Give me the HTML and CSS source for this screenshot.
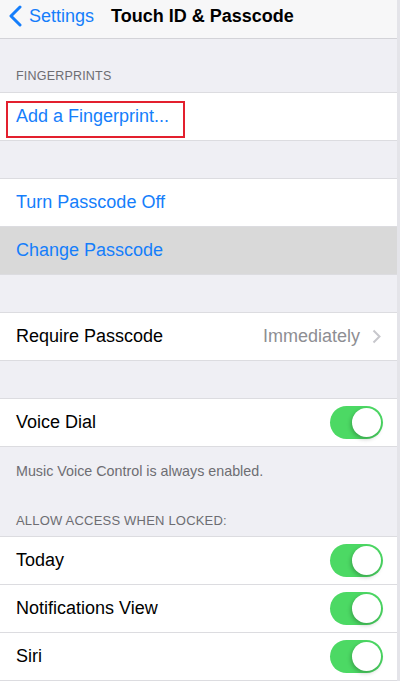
FILE: index.html
```html
<!DOCTYPE html>
<html>
<head>
    <meta charset="utf-8">
    <title>Touch ID &amp; Passcode</title>
    <link rel="stylesheet" href="styles.css">
</head>
<body>
    <div class="nav">
        <div class="nav-back">
            <svg class="chevron-back" width="16" height="22" viewBox="0 0 16 22"><path d="M13 2 L4 11 L13 20" fill="none" stroke="#157efb" stroke-width="3" stroke-linecap="round" stroke-linejoin="round"/></svg>
            <span>Settings</span>
        </div>
        <div class="nav-title">Touch ID &amp; Passcode</div>
    </div>

    <div class="section-header first">FINGERPRINTS</div>
    <div class="group">
        <div class="row">
            <span class="label blue">Add a Fingerprint...</span>
            <div class="highlight-box"></div>
        </div>
    </div>

    <div class="spacer"></div>
    <div class="group">
        <div class="row">
            <span class="label blue">Turn Passcode Off</span>
        </div>
        <div class="row pressed">
            <span class="label blue">Change Passcode</span>
        </div>
    </div>

    <div class="spacer"></div>
    <div class="group">
        <div class="row">
            <span class="label">Require Passcode</span>
            <span class="detail">Immediately</span>
            <svg class="disclosure" width="9" height="15" viewBox="0 0 9 15"><path d="M1.5 1.5 L7.5 7.5 L1.5 13.5" fill="none" stroke="#c7c7cc" stroke-width="2"/></svg>
        </div>
    </div>

    <div class="spacer"></div>
    <div class="group">
        <div class="row">
            <span class="label">Voice Dial</span>
            <div class="switch"><div class="knob"></div></div>
        </div>
    </div>
    <div class="section-footer">Music Voice Control is always enabled.</div>

    <div class="section-header locked">ALLOW ACCESS WHEN LOCKED:</div>
    <div class="group">
        <div class="row">
            <span class="label">Today</span>
            <div class="switch"><div class="knob"></div></div>
        </div>
        <div class="row">
            <span class="label">Notifications View</span>
            <div class="switch"><div class="knob"></div></div>
        </div>
        <div class="row">
            <span class="label">Siri</span>
            <div class="switch"><div class="knob"></div></div>
        </div>
    </div>
</body>
</html>
```

FILE: styles.css
```css
html, body { margin: 0; padding: 0; }
body {
    width: 397px;
    height: 681px;
    overflow: hidden;
    background-color: #efeff4;
    font-family: "Liberation Sans", Arial, sans-serif;
    border-right: 3px solid #e4e4e9;
}

.nav {
    height: 32px;
    padding-bottom: 6px;
    background-color: #f7f7f8;
    border-bottom: 1px solid #d3d3d8;
    display: flex;
    align-items: center;
}
.nav-back {
    display: flex;
    align-items: center;
    color: #157efb;
    font-size: 18px;
    padding-left: 7px;
    width: 104px;
}
.chevron-back { margin-right: 6px; }
.nav-title {
    font-size: 18px;
    font-weight: bold;
    color: #000;
}

.section-header {
    font-size: 12.5px;
    line-height: 15px;
    color: #6d6d72;
    padding: 33px 16px 8px 16px;
    letter-spacing: 0.2px;
}
.section-header.first { padding: 30px 16px 8px 16px; }
.section-header.locked { font-size: 13px; }
.section-footer {
    font-size: 14.3px;
    line-height: 17px;
    color: #6d6d72;
    padding: 16px 16px 0 16px;
}

.spacer { height: 37px; }

.group {
    background-color: #fff;
    border-top: 1px solid #dcdce0;
    border-bottom: 1px solid #dcdce0;
}
.row {
    position: relative;
    height: 47px;
    display: flex;
    align-items: center;
    padding: 0 16px;
}
.row + .row { border-top: 1px solid #dcdce0; }
.row.pressed { background-color: #d9d9d9; }

.label { font-size: 18px; color: #000; flex: 1; }
.label.blue { color: #157efb; }
.detail { font-size: 18px; color: #8e8e93; margin-right: 12px; }

.highlight-box {
    position: absolute;
    left: 6px;
    top: 8px;
    width: 175px;
    height: 33px;
    border: 2px solid #e3202e;
}

.switch {
    width: 53px;
    height: 33px;
    border-radius: 17px;
    background-color: #4cd964;
    position: relative;
    margin-right: -2px;
}
.knob {
    position: absolute;
    right: 2px;
    top: 2px;
    width: 29px;
    height: 29px;
    border-radius: 50%;
    background-color: #fff;
    box-shadow: -1px 2px 4px rgba(0, 0, 0, 0.25);
}
```
